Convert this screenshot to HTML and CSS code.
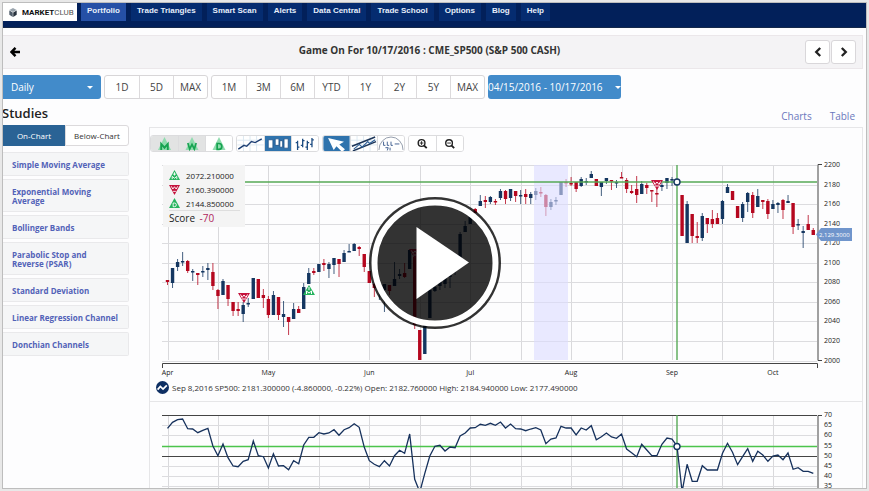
FILE: index.html
```html
<!DOCTYPE html>
<html lang="en">
<head>
<meta charset="utf-8">
<title>MarketClub - Game On</title>
<link rel="stylesheet" href="styles.css">
</head>
<body>
<div class="frame">
  <header class="topbar">
    <a class="logo" href="#">
      <svg class="logo-mark" viewBox="0 0 10 11" aria-hidden="true"><path d="M5 0l4.600 2.500L5 5 .4 2.500z" fill="#9aa4ad"/><path d="M.4 3L4.700 5.400V11L.4 8.300z" fill="#4d5a68"/><path d="M9.600 3L5.300 5.400V11l4.300-2.700z" fill="#28323e"/></svg>
      <span><b>MARKET</b>CLUB</span>
    </a>
    <nav class="nav">
      <a class="active" href="#">Portfolio</a><a href="#">Trade Triangles</a><a href="#">Smart Scan</a><a href="#">Alerts</a><a href="#">Data Central</a><a href="#">Trade School</a><a href="#">Options</a><a href="#">Blog</a><a href="#">Help</a>
    </nav>
  </header>

  <div class="titlebar">
    <button class="back" aria-label="Back"><svg viewBox="0 0 10 10"><path d="M5.500 0.800L1.500 5l4 4.200M1.600 5H10" fill="none" stroke="#000" stroke-width="2.400"/></svg></button>
    <h1>Game On For 10/17/2016 : CME_SP500 (S&amp;P 500 CASH)</h1>
    <div class="pager">
      <button aria-label="Previous"><svg viewBox="0 0 8 10"><path d="M6.200 1L2.200 5l4 4" fill="none" stroke="#222" stroke-width="2.300"/></svg></button>
      <button aria-label="Next"><svg viewBox="0 0 8 10"><path d="M1.800 1l4 4-4 4" fill="none" stroke="#222" stroke-width="2.300"/></svg></button>
    </div>
  </div>

  <div class="ranges">
    <div class="picker"><select aria-label="Interval"><option>Daily</option></select></div>
    <div class="group"><button>1D</button><button>5D</button><button>MAX</button></div>
    <div class="group"><button>1M</button><button>3M</button><button>6M</button><button>YTD</button><button>1Y</button><button>2Y</button><button>5Y</button><button>MAX</button></div>
    <button class="dates">04/15/2016 - 10/17/2016</button>
  </div>

  <div class="content">
    <aside class="studies">
      <h2>Studies</h2>
      <div class="tabs"><button class="on">On-Chart</button><button>Below-Chart</button></div>
      <ul>
        <li><a href="#">Simple Moving Average</a></li>
        <li><a href="#">Exponential Moving<br>Average</a></li>
        <li><a href="#">Bollinger Bands</a></li>
        <li><a href="#">Parabolic Stop and<br>Reverse (PSAR)</a></li>
        <li><a href="#">Standard Deviation</a></li>
        <li><a href="#">Linear Regression Channel</a></li>
        <li><a href="#">Donchian Channels</a></li>
      </ul>
    </aside>

    <main class="main">
      <div class="views"><a href="#">Charts</a><a href="#">Table</a></div>
      <section class="panel">
        <div class="tools">
          <div class="toolgroup">
            <button class="pressed" aria-label="Monthly triangles"><svg viewBox="0 0 28 16"><path d="M14 1l7 14H7z" fill="#8fdcae"/><path d="M10.500 15V8.500L14 12.500l3.500-4V15" fill="none" stroke="#16a350" stroke-width="2"/></svg></button>
            <button class="pressed" aria-label="Weekly triangles"><svg viewBox="0 0 28 16"><path d="M14 1l7 14H7z" fill="#8fdcae"/><path d="M9.500 7.500l2 6.500 2.500-5 2.500 5 2-6.500" fill="none" stroke="#16a350" stroke-width="1.800"/></svg></button>
            <button aria-label="Daily triangles"><svg viewBox="0 0 28 16"><path d="M14 1l7 14H7z" fill="#8fdcae"/><path d="M12 8h2q3 0 3 3.200T14 14.400h-2z" fill="none" stroke="#16a350" stroke-width="1.800"/></svg></button>
          </div>
          <div class="toolgroup">
            <button aria-label="Line chart"><svg viewBox="0 0 28 16"><path d="M0 4.500h28M0 9.500h28M6.500 0v16M13.500 0v16M20.500 0v16" stroke="#dbe8f1"/><path d="M1 14l6-4 3 1 5-5 4 1 7-4" fill="none" stroke="#1d3f74" stroke-width="1.500"/></svg></button>
            <button aria-label="Candlestick chart"><svg viewBox="0 0 28 16"><path d="M0 0h28v16H0z" fill="#2f73ad"/><path d="M3.500 4h5v9h-5zM11 3h4v7h-4zM16 5h3v7h-3zM20.500 3h4.500v10h-4.500z" fill="#fff" stroke="#174a80" stroke-width=".8"/></svg></button>
            <button aria-label="Bar chart"><svg viewBox="0 0 28 16"><path d="M6 5v10M4 7h2M6 12h2M11.500 3v9M9.500 10h2M11.500 5h2M16.500 5v10M14.500 12h2M16.500 7h2M21.500 2v10M19.500 9h2M21.500 4h2" stroke="#1d4c82" stroke-width="1.400"/></svg></button>
          </div>
          <div class="toolgroup">
            <button aria-label="Pointer"><svg viewBox="0 0 28 16"><path d="M0 0h28v16H0z" fill="#2f73ad"/><path d="M5 2l17 4-5 3 6 5-3 3-6-6-3 4z" fill="#fff"/></svg></button>
            <button aria-label="Trend channel"><svg viewBox="0 0 28 16"><path d="M0 4.500h28M0 9.500h28M6.500 0v16M13.500 0v16M20.500 0v16" stroke="#dbe8f1"/><path d="M1 11L26 1M2 16L27 6" fill="none" stroke="#1d3558" stroke-width="1.600"/><path d="M3 14l6-5 3 3 6-6 2 2 6-4" fill="none" stroke="#2d5f97" stroke-width="1.200"/></svg></button>
            <button aria-label="Annotations"><svg viewBox="0 0 28 16"><path d="M1 15A13 14 0 0 1 27 15" fill="none" stroke="#8c96a6"/><path d="M6 6v4h2M10 6v4h2M14 6v4h2M18 8.500h5M8 12.500h3l-1 3M13 12.500v3" fill="none" stroke="#3b5b8e"/></svg></button>
          </div>
          <div class="toolgroup">
            <button aria-label="Zoom in"><svg viewBox="0 0 28 16"><circle cx="13" cy="7.500" r="3.600" fill="none" stroke="#222" stroke-width="1.500"/><path d="M15.500 10l3 3" stroke="#222" stroke-width="2"/><path d="M11 7.500h4M13 5.500v4" stroke="#222"/></svg></button>
            <button aria-label="Zoom out"><svg viewBox="0 0 28 16"><circle cx="13" cy="7.500" r="3.600" fill="none" stroke="#222" stroke-width="1.500"/><path d="M15.500 10l3 3" stroke="#222" stroke-width="2"/><path d="M11 7.500h4" stroke="#222"/></svg></button>
          </div>
        </div>

        <div class="chart">
          <svg id="price" viewBox="150 155 712 224" role="img" aria-label="Daily price chart"></svg>
          <div class="legend">
            <div class="score-row"><svg viewBox="0 0 12 12"><path d="M6 0l6 11H0z" fill="#27b45f"/><path d="M3.500 10V7L6 9l2.500-2v3M6 2.500V6M4.500 4.500h3" fill="none" stroke="#fff"/></svg>2072.210000</div>
            <div class="score-row"><svg viewBox="0 0 12 12"><path d="M6 12L12 1H0z" fill="#c4123c"/><path d="M2.500 2.500l1.700 3L6 3l1.800 2.500 1.700-3M4.500 8h3" fill="none" stroke="#fff"/></svg>2160.390000</div>
            <div class="score-row"><svg viewBox="0 0 12 12"><path d="M6 0l6 11H0z" fill="#27b45f"/><path d="M4.500 5.500H6q2 0 2 2t-2 2H4.500z" fill="none" stroke="#fff"/></svg>2144.850000</div>
            <div class="total">Score <span>-70</span></div>
          </div>
          <button class="play" aria-label="Play video"><svg viewBox="0 0 133 133"><circle cx="66.500" cy="66.500" r="66" fill="#000" fill-opacity=".8"/><circle cx="66.500" cy="66.500" r="60.500" fill="none" stroke="#fff" stroke-width="6"/><path d="M48 30.500v72L100.500 66z" fill="#fff"/></svg></button>
        </div>

        <p class="quote"><svg viewBox="0 0 12 12" aria-hidden="true"><circle cx="6" cy="6" r="6" fill="#0e2f63"/><path d="M1.500 8l2.500-3 2.500 2.500L10 4" fill="none" stroke="#fff" stroke-width="1.600"/></svg>Sep 8,2016 SP500: 2181.300000 (-4.860000, -0.22%) Open: 2182.760000 High: 2184.940000 Low: 2177.490000</p>
        <div class="chart lower">
          <svg id="study" viewBox="150 402 712 100" role="img" aria-label="Study chart"></svg>
        </div>
      </section>
    </main>
  </div>
</div>
<script src="chart.js"></script>
</body>
</html>
```
FILE: styles.css
```css
* { box-sizing: border-box; }
body {
  margin: 0;
  height: 100vh;
  padding: 2px;
  background: #e8e8e8;
  font-family: "Open Sans", sans-serif;
  color: #333;
}
button, select { font-family: inherit; margin: 0; padding: 0; border: 0; background: none; color: inherit; }
svg { display: block; }
a { text-decoration: none; }

.frame {
  height: 100%;
  border: 1px solid #bdbdbd;
  background: #fdfdfe;
  overflow: hidden;
}

.topbar {
  display: flex;
  align-items: flex-start;
  gap: 4px;
  height: 25px;
  background: #02205a;
  border-bottom: 1px solid #14284a;
}
.logo {
  display: flex;
  align-items: center;
  gap: 5px;
  width: 74px;
  height: 18px;
  padding: 0 6px;
  background: #fff;
  color: #555;
  font: 8px/17px Roboto, sans-serif;
}
.logo b { color: #111; }
.logo-mark { width: 8px; height: 9px; flex: none; }
.nav { display: flex; gap: 5px; }
.nav a {
  height: 18px;
  padding: 0 6px;
  background: #052c70;
  color: #e6eefa;
  font: bold 8px/16px "Liberation Sans", sans-serif;
}
.nav a.active { background: #2550a6; }

.titlebar {
  display: grid;
  grid-template-columns: 60px 1fr 60px;
  align-items: center;
  height: 34px;
  margin: 7px 3px 0 0;
  padding-right: 6px;
  border: 1px solid #ebe7ea;
  border-left: 0;
  background: #f4f3f5;
}
.titlebar h1 { margin: 0; padding-bottom: 4px; text-align: center; font-size: 10px; line-height: 16px; font-weight: 700; }
.back { width: 10px; height: 10px; margin-left: 7px; }
.pager { display: flex; justify-content: flex-end; gap: 1px; }
.pager button {
  display: grid;
  place-items: center;
  width: 25px;
  height: 24px;
  border: 1px solid #d9d7da;
  border-radius: 3px;
  background: #fff;
}
.pager svg { width: 8px; height: 10px; }

.ranges { display: flex; gap: 3px; margin-top: 6px; font-size: 10px; }
.picker { position: relative; width: 98px; }
.picker select {
  appearance: none;
  width: 100%;
  height: 24px;
  padding-left: 8px;
  border-radius: 0 3px 3px 0;
  background: #428bca;
  color: #fff;
  font-size: 10px;
}
.picker::after, .dates::after {
  content: "";
  border: 3px solid transparent;
  border-top-color: #fff;
  border-bottom: 0;
}
.picker::after { position: absolute; right: 8px; top: 11px; }
.group { display: flex; border: 1px solid #d8d6d8; border-radius: 3px; background: #fff; }
.group button { width: 34px; height: 22px; font-size: 10px; color: #444; }
.group button + button { border-left: 1px solid #dcdadc; }
.dates {
  display: flex;
  align-items: center;
  justify-content: space-between;
  width: 133px;
  height: 24px;
  border-radius: 3px;
  background: #428bca;
  color: #fff;
  font-size: 10px;
}

.content { display: flex; align-items: flex-start; }
.studies { width: 126px; margin-right: 20px; flex: none; }
.studies h2 { margin: 5px 0 3px -1px; font-size: 13px; line-height: 18px; font-weight: 600; color: #222; }
.tabs { display: flex; }
.tabs button {
  flex: 1;
  height: 21px;
  border: 1px solid #dcdadc;
  border-radius: 0 3px 3px 0;
  background: #fff;
  font-size: 8px;
}
.tabs .on { border: 0; border-radius: 0; background: #2a6395; color: #fff; }
.studies ul { margin: 6px 0 0; padding: 0; list-style: none; display: grid; gap: 3px; }
.studies li {
  padding: 7px 8px 6px 9px;
  border: 1px solid #e9e9eb;
  border-left: 0;
  border-radius: 0 2px 2px 0;
  background: #f5f6f7;
  font-size: 8px;
  line-height: 9px;
  font-weight: 700;
  white-space: nowrap;
}
.studies a { color: #5262b8; }

.main { flex: 1; min-width: 0; margin-right: 3px; }
.views { display: flex; justify-content: flex-end; gap: 18px; padding: 9px 8px 0 0; font-size: 10px; line-height: 16px; }
.views a { color: #6b78bd; }
.panel { margin-top: 3px; border: 1px solid #e6e6e8; border-bottom: 0; }
.tools { display: flex; gap: 3px; padding: 7px 0 0 0; }
.toolgroup { display: flex; border: 1px solid #dcdcde; border-radius: 3px; overflow: hidden; }
.toolgroup button { width: 27px; height: 15px; background: #fff; }
.toolgroup button.pressed { background: #e2e3e3; }
.toolgroup button + button { border-left: 1px solid #dcdcde; }
.toolgroup svg { width: 100%; height: 100%; }

.chart { position: relative; margin-top: 3px; }
.chart > svg { width: 100%; height: auto; font-family: "Open Sans", sans-serif; }
.legend {
  position: absolute;
  left: 13px;
  top: 10px;
  width: 82px;
  padding: 3px 5px 2px 6px;
  background: #f4f4f4;
  font-size: 8px;
  color: #222;
}
.score-row { display: flex; align-items: center; gap: 6px; height: 14px; }
.score-row svg { width: 11px; height: 11px; }
.total { border-top: 1px solid #dedede; line-height: 14px; font-size: 10px; }
.total span { color: #b0265c; margin-left: 2px; }
.play { position: absolute; left: 40%; top: 48%; width: 133px; height: 133px; transform: translate(-50%, -50%); border-radius: 50%; }

.quote { display: flex; align-items: center; gap: 3px; margin: 0; padding-left: 6px; height: 17px; font-size: 8px; line-height: 17px; white-space: nowrap; }
.quote svg { width: 13px; height: 13px; }
.lower { margin-top: 5px; border-top: 1px solid #e6e6e8; }
```
FILE: chart.js
```js
// One entry per session: direction, wick top, wick bottom, body top, body bottom.
const sessions = `r280 285 280 282,b268 288 268 283,b259 271 262 267,b252 266 261 262,r260 273 261 271,b269 281 271 272,r273 285 273 275,b266 277 271 272,b263 280 268 270,r263 290 272 286,
r289 309 290 296,b279 295 281 295,r285 306 285 299,r302 316 302 311,r302 316 309 311,b302 322 305 314,b298 307 303 304,b278 299 278 299,r279 298 279 298,r289 308 295 298,
r296 318 299 315,b291 315 295 315,r297 320 297 315,b301 327 314 317,r317 335 317 322,b303 319 309 319,r306 313 309 313,b283 309 287 309,b268 284 273 284,r268 275 271 273,
b264 272 264 272,r259 271 263 265,b262 278 264 269,b258 274 258 265,r259 277 259 264,b250 262 253 262,b244 252 251 252,b243 251 244 251,r246 256 247 249,r254 272 254 267,
r271 283 271 283,r283 297 284 288,b283 300 284 288,b284 312 284 290,r285 295 285 291,b262 286 279 286,b269 279 274 276,r263 278 273 277,b250 269 250 269,r250 329 257 325,
r330 360 330 360,b323 354 323 354,b290 318 290 318,b285 292 287 291,b280 290 282 286,b276 288 278 284,b275 288 275 277,b258 275 260 270,b232 260 234 260,b221 232 226 232,
b217 224 217 224,r208 213 209 213,b195 206 201 206,r196 208 200 202,b196 204 197 202,r199 205 201 202,b189 200 191 198,r190 204 191 199,b189 201 189 198,r191 202 191 196,
b190 204 195 196,r189 204 194 197,b192 204 194 198,b188 200 191 195,r187 197 192 193,r194 216 195 207,b199 210 202 207,b197 205 200 201,b182 195 182 195,r179 187 182 183,
r177 186 183 184,r182 192 182 189,b177 187 179 186,b178 185 181 182,b171 178 174 178,r179 186 179 186,b182 196 182 187,b178 184 178 181,r180 190 180 181,b180 188 182 183,
r172 178 177 178,r178 193 180 189,r185 194 191 193,r176 203 189 195,b181 194 184 194,r183 194 185 188,r190 202 190 191,r185 207 193 194,b183 191 185 187,b178 189 178 183,
b177 186 179 180,b182 182 182 182,r195 236 195 236,b201 243 204 243,r214 243 214 236,r222 243 236 238,b213 241 216 238,r218 233 218 224,r210 228 219 224,r213 224 218 224,
b200 224 201 219,b184 193 187 193,r191 200 191 200,r206 218 206 218,b202 222 204 218,b192 212 193 202,r192 218 195 213,b189 207 196 207,r200 209 200 202,r199 219 201 214,
b200 209 204 209,b202 213 203 205,r199 219 200 210,b195 203 201 203,r203 234 203 227,b219 230 224 225,b226 248 231 233,r215 230 224 230,r228 235 230 235`
  .split(",").map(s => s.trim());

// Study values in thirds of a unit below the top of the lower axis label band.
const study = [175,157,149,147,176,177,188,181,175,228,257,222,263,288,290,274,269,213,257,260,294,251,288,287,299,272,281,225,202,202,188,192,189,179,196,179,173,161,172,232,272,283,
290,272,288,257,241,250,192,328,366,310,258,229,226,243,231,233,198,189,174,173,163,166,160,166,156,174,162,176,177,182,177,173,180,221,207,204,169,174,174,195,174,180,167,
209,200,189,201,205,192,237,248,260,223,240,257,257,223,204,207,228,365,283,334,334,287,300,300,300,250,220,247,284,260,236,274,244,255,274,258,255,269,249,298,293,304,304,310];

const FIRST = 167.5, STEP = 5.045;
const xAt = i => FIRST + i * STEP;
const line = (x1, y1, x2, y2, color, w = 1) =>
  `<path d="M${x1} ${y1}L${x2} ${y2}" stroke="${color}" stroke-width="${w}" fill="none"/>`;
const label = (x, y, text, anchor = "start") =>
  `<text x="${x}" y="${y}" font-size="7" fill="#222" text-anchor="${anchor}">${text}</text>`;

function columns(top, bottom) {
  let out = "";
  for (let k = 0; k < 13; k++) {
    const x = Math.round(xAt(k * 10)) + 0.5;
    out += line(x, top, x, bottom, "#d9d9dc");
  }
  return out;
}

function signal(x, y, down) {
  return down
    ? `<path d="M${x - 6} ${y}h12l-6 10z" fill="#c4123c"/><path d="M${x - 3.500} ${y + 1.500}l1.500 3 2-2.500 2 2.500 1.500-3M${x - 2} ${y + 6}h4" fill="none" stroke="#fff"/>`
    : `<path d="M${x} ${y}l6 10h-12z" fill="#27b45f"/><path d="M${x - 2.500} ${y + 9}v-3l2.500 2 2.500-2v3M${x} ${y + 2}v3" fill="none" stroke="#fff"/>`;
}

function drawPrice() {
  let out = columns(165, 360);
  for (let k = 0; k <= 10; k++) {
    const y = Math.round(165 + k * 19.55);
    out += line(162, y + 0.5, 817, y + 0.5, "#dcdcdf") + label(824, y + 2, 2200 - k * 20);
  }
  sessions.forEach((s, i) => {
    const [hi, lo, top, bottom] = s.slice(1).split(" ").map(Number);
    const color = s[0] === "r" ? "#b5071f" : "#143660";
    const x = xAt(i);
    out += line(x, hi, x, lo, color, 0.8);
    out += `<rect x="${x - 1.700}" y="${top}" width="3.400" height="${Math.max(bottom - top, 1.500)}" fill="${color}"/>`;
  });
  out += `<rect x="534" y="165" width="34" height="195" fill="#dcdcff" opacity=".6"/>`;
  out += line(245, 182, 817, 182, "#56a856", 1.400) + line(677, 165, 677, 360, "#56a856", 1.400);
  out += signal(244, 293, true) + signal(309, 285, false) + signal(415, 249, true) + signal(657, 180, true);
  out += `<circle cx="677" cy="182" r="3" fill="#fff" stroke="#143660" stroke-width="1.400"/>`;
  out += `<path d="M822 164.500h-4v196h4M162.500 368v-4.500h655v4.500" fill="none" stroke="#444"/>`;
  ["Apr", "May", "Jun", "Jul", "Aug", "Sep", "Oct"].forEach((m, k) => {
    out += label(xAt(k * 20), 375, m, "middle");
  });
  out += `<path d="M816 234.500l5-6.500h31v13h-31z" fill="#7095cc"/><text x="819" y="237" font-size="6" fill="#fff">2,129.3000</text>`;
  document.getElementById("price").innerHTML = out;
}

function drawStudy() {
  let out = columns(415, 502);
  for (let k = 0; k < 8; k++) {
    const y = Math.round(415 + k * 10.17);
    const strong = k === 0 || k === 4;
    out += line(162, y + 0.5, 817, y + 0.5, strong ? "#444" : "#dcdcdf") + label(824, y + 2, 70 - k * 5);
  }
  out += line(162, 446.5, 817, 446.5, "#4cc44c", 1.300) + line(677, 415, 677, 502, "#56a856", 1.400);
  const points = study.map((z, i) => `${xAt(i).toFixed(1)},${(370 + z / 3).toFixed(1)}`).join(" ");
  out += `<polyline points="${points}" fill="none" stroke="#16315c" stroke-width="1.300"/>`;
  out += `<circle cx="677" cy="446.500" r="3" fill="#fff" stroke="#143660" stroke-width="1.400"/>`;
  out += `<path d="M822 415.500h-4v90" fill="none" stroke="#444"/>`;
  document.getElementById("study").innerHTML = out;
}

drawPrice();
drawStudy();
```
